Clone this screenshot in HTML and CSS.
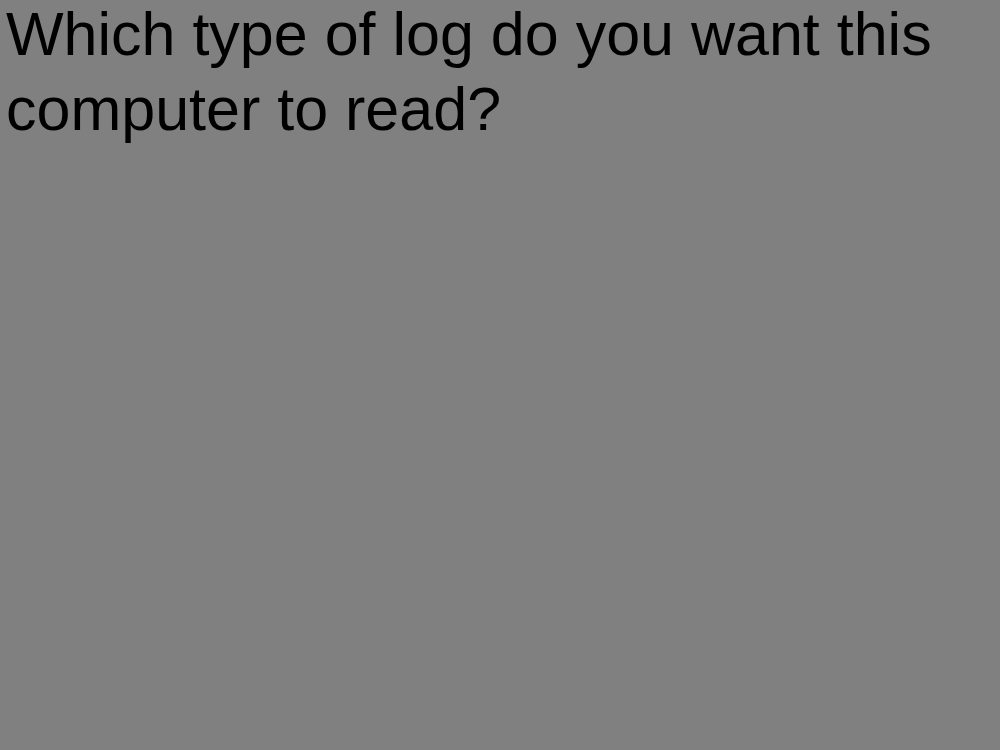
FILE: index.html
```html
<!DOCTYPE html>
<html lang="en">
<head>
<meta charset="utf-8">
<title>Log reader</title>
<link rel="stylesheet" href="styles.css">
</head>
<body>
<main class="screen">
  <p class="prompt">Which type of log do you want this<br>computer to read?</p>
</main>
</body>
</html>
```

FILE: styles.css
```css
html, body {
  margin: 0;
  padding: 0;
  background: #808080;
}
.screen {
  width: 1000px;
  height: 750px;
  background: #808080;
  overflow: hidden;
  padding-left: 6px;
  box-sizing: border-box;
}
.prompt {
  margin: -3px 0 0 0;
  font-family: "Liberation Sans", Arial, sans-serif;
  font-size: 61px;
  line-height: 75px;
  letter-spacing: 0;
  color: #000;
}
```
